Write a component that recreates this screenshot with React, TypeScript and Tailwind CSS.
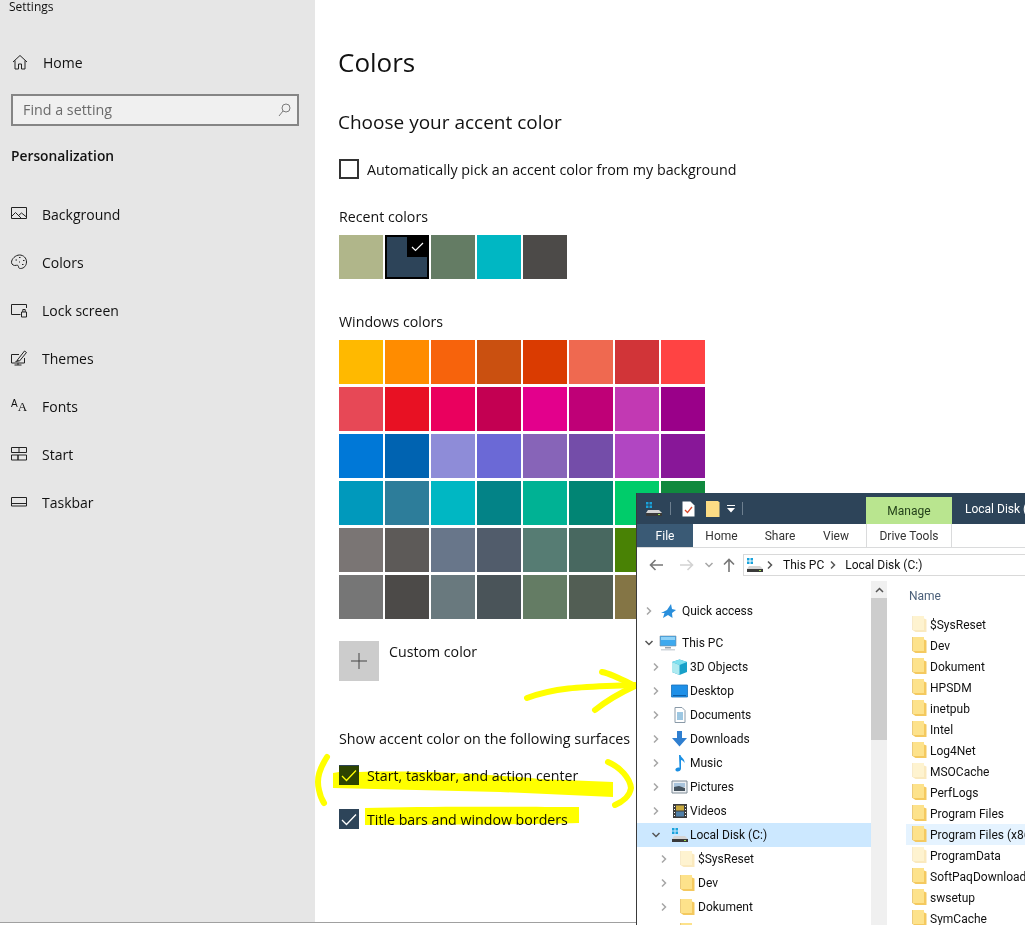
import React from "react";

const recentColors = ["#b0b68a", "#2d4459", "#647c64", "#00b7c3", "#4c4a48"];

const windowsColors = [
  ["#ffb900", "#ff8c00", "#f7630c", "#ca5010", "#da3b01", "#ef6950", "#d13438", "#ff4343"],
  ["#e74856", "#e81123", "#ea005e", "#c30052", "#e3008c", "#bf0077", "#c239b3", "#9a0089"],
  ["#0078d7", "#0063b1", "#8e8cd8", "#6b69d6", "#8764b8", "#744da9", "#b146c2", "#881798"],
  ["#0099bc", "#2d7d9a", "#00b7c3", "#038387", "#00b294", "#018574", "#00cc6a", "#10893e"],
  ["#7a7574", "#5d5a58", "#68768a", "#515c6b", "#567c73", "#486860", "#498205", "#107c10"],
  ["#767676", "#4c4a48", "#69797e", "#4a5459", "#647c64", "#525e54", "#847545", "#7e735f"],
];

const Line = ({ d }: { d: string }) => (
  <svg width="18" height="18" viewBox="0 0 18 18" fill="none" stroke="#222" strokeWidth="1" className="shrink-0">
    <path d={d} />
  </svg>
);

const navItems = [
  { label: "Background", d: "M1.500 2.500h15v11h-15zM1.500 11.500l4-4 6 6M8.500 10.500l3-2.500 5 4" },
  { label: "Colors", d: "M9.500 2c4 0 7 3 7 7 0 3.500-2.500 6.500-6 6.500-1.500 0-2-.8-2-1.800 0-1.200-1-1.700-2-1.400-2.500.7-5-.5-5-3C1.500 6 5.500 2 9.500 2zM5.500 7h1.500M9 4.500h1.500M13 7.500h1.500M12 11.500h1.500M9 9h1" },
  { label: "Lock screen", d: "M16.500 7V3.500h-15v10h9M11.500 11h5v5h-5zM12.800 11V8.500h2.400V11" },
  { label: "Themes", d: "M9 5.500H1.500v8.500h13V9M4.500 16h7M8 14v2M7 11.500L14.500 2l2 1.500-7 8.500zM5.500 12.500l3-.5" },
  { label: "Fonts", d: "" },
  { label: "Start", d: "M1.500 2.500h15v5h-15zM9 2.500v5M1.500 10h6.500v5h-6.500zM8 10h8.500v5H8z" },
  { label: "Taskbar", d: "M1.500 4.500h15v8.500h-15zM1.500 10.500h15" },
];

const Folder = ({ faded }: { faded?: boolean }) => (
  <svg width="15" height="17" viewBox="0 0 15 17" className={faded ? "opacity-40 shrink-0" : "shrink-0"}>
    <path d="M0.500 0h11.500v14H0.500z" fill="#fde28b" />
    <path d="M12 2.500l2.500 1v12.500H3.500L0.500 14H12z" fill="#f4c95f" />
    <path d="M0.500 0v14" stroke="#e6c26a" strokeWidth="0.800" />
  </svg>
);

const Chevron = ({ open, dark }: { open?: boolean; dark?: boolean }) => (
  <svg width="10" height="10" viewBox="0 0 10 10" fill="none" stroke={dark ? "#555" : "#a6a6a6"} strokeWidth="1.500" className="shrink-0">
    <path d={open ? "M1.500 3l3.500 3.500L8.500 3" : "M3 1.500L6.500 5 3 8.500"} />
  </svg>
);

const Drive = () => (
  <svg width="18" height="16" viewBox="0 0 18 16" className="shrink-0">
    <path d="M1 1h2.500v2.500H1zM4.500 1H7v2.500H4.500zM1 4.500h2.500V7H1zM4.500 4.500H7V7H4.500z" fill="#19a3dc" />
    <path d="M3 9h11l3 3H1z" fill="#d5d5d5" />
    <path d="M1 12h16v3H1z" fill="#3a3a3a" />
    <path d="M13 13h2v1h-2z" fill="#9ce04c" />
  </svg>
);

const treeIcons: Record<string, React.ReactNode> = {
  "This PC": (
    <svg width="18" height="16" viewBox="0 0 18 16" className="shrink-0">
      <path d="M1 1h16v10H1z" fill="#3ea9ee" stroke="#7c8ea0" strokeWidth="0.600" />
      <path d="M2 2h14v3H2z" fill="#8ed2f8" />
      <path d="M6 12h6v1.500H6z" fill="#9aa5ae" />
      <path d="M2 14h14v1.500H2z" fill="#cfd5da" />
    </svg>
  ),
  "3D Objects": (
    <svg width="17" height="16" viewBox="0 0 17 16" className="shrink-0">
      <path d="M8.500 0.500L16 3v10l-7.500 3L1 13V3z" fill="#18a0c9" />
      <path d="M1 3l7.500 3L16 3 8.500 0.500z" fill="#7ee0ee" />
      <path d="M1 3l7.500 3v10L1 13z" fill="#aeeaf0" />
    </svg>
  ),
  Desktop: (
    <svg width="17" height="16" viewBox="0 0 17 16" className="shrink-0">
      <path d="M0.500 2h16v12h-16z" fill="#1e90e8" stroke="#1670b8" strokeWidth="0.800" />
      <path d="M2 12h13v1H2z" fill="#0c5ea8" />
    </svg>
  ),
  Documents: (
    <svg width="16" height="16" viewBox="0 0 16 16" className="shrink-0">
      <path d="M3 0.500h7l3 3v12H3z" fill="#fff" stroke="#8a9aa8" />
      <path d="M5 6h6M5 8h6M5 10h6M5 12h6" stroke="#3b8ec4" />
    </svg>
  ),
  Downloads: (
    <svg width="17" height="16" viewBox="0 0 17 16" className="shrink-0">
      <path d="M6 0h5v7h5l-7.500 8.500L1 7h5z" fill="#2f7fd0" />
    </svg>
  ),
  Music: (
    <svg width="16" height="17" viewBox="0 0 16 17" className="shrink-0">
      <path d="M7 0h1.500c.5 3 4.500 3.500 4 8-.8-2-2.500-3-3.500-3v8.500c0 2-2 3.200-3.800 3-2-.3-2.400-2.200-1-3.300 1-.8 2.300-.9 3.300-.5z" fill="#1a8fe3" />
    </svg>
  ),
  Pictures: (
    <svg width="17" height="16" viewBox="0 0 17 16" className="shrink-0">
      <path d="M1 2h15v12H1z" fill="#eef1f4" stroke="#7e8b96" />
      <path d="M3 4h11v4H3z" fill="#a9c4dc" />
      <path d="M3 8l5-1 6 2v3H3z" fill="#45535e" />
    </svg>
  ),
  Videos: (
    <svg width="16" height="16" viewBox="0 0 16 16" className="shrink-0">
      <path d="M1 1h14v14H1z" fill="#3d3d3d" />
      <path d="M4 2.500h8v5H4z" fill="#c7a93e" />
      <path d="M4 8.500h8v5H4z" fill="#4f7fa8" />
      <path d="M2 3h1v1H2zM2 6h1v1H2zM2 9h1v1H2zM2 12h1v1H2zM13 3h1v1h-1zM13 6h1v1h-1zM13 9h1v1h-1zM13 12h1v1h-1z" fill="#fff" />
    </svg>
  ),
};

const pcItems = ["3D Objects", "Desktop", "Documents", "Downloads", "Music", "Pictures", "Videos"];

const files = [
  { name: "$SysReset", faded: true },
  { name: "Dev" },
  { name: "Dokument" },
  { name: "HPSDM" },
  { name: "inetpub" },
  { name: "Intel" },
  { name: "Log4Net" },
  { name: "MSOCache", faded: true },
  { name: "PerfLogs" },
  { name: "Program Files" },
  { name: "Program Files (x86)", selected: true },
  { name: "ProgramData", faded: true },
  { name: "SoftPaqDownloadDirectory" },
  { name: "swsetup" },
  { name: "SymCache" },
];

const Explorer = () => (
  <div className="absolute left-[636px] top-[493px] w-[389px] h-[432px] bg-white border-l border-[#3a3a3a] overflow-hidden flex flex-col text-[12px] leading-[16px] text-[#111] font-['Roboto',sans-serif]">
    <div className="h-[31px] bg-[#2d4459] flex items-end shrink-0 pl-2">
      <div className="h-[31px] flex items-center gap-[7px] w-[221px] shrink-0">
        <Drive />
        <span className="w-px h-[13px] bg-[#6d7f8f]" />
        <svg width="13" height="16" viewBox="0 0 13 16" className="ml-1">
          <path d="M0.500 0.500h8l4 4v11H0.500z" fill="#fff" />
          <path d="M3 9l2.500 2.500L10 6" stroke="#d9482b" strokeWidth="1.300" fill="none" />
        </svg>
        <svg width="14" height="16" viewBox="0 0 14 16" className="ml-1">
          <path d="M0 0h12l1.500 1.500V16H0z" fill="#fcdc85" />
        </svg>
        <svg width="8" height="8" viewBox="0 0 8 8">
          <path d="M0 0h8v1H0zM0 3h8L4 7.500z" fill="#fff" />
        </svg>
        <span className="w-px h-[13px] bg-[#6d7f8f]" />
      </div>
      <div className="w-[86px] h-[27px] shrink-0 bg-[#b9e58f] flex items-center justify-center text-[#24421a] pt-[1px]">Manage</div>
      <span className="ml-[13px] h-[31px] flex items-center text-white whitespace-nowrap">Local Disk (C:)</span>
    </div>
    <div className="h-[24px] flex border-b border-[#dadbdc] shrink-0">
      <div className="w-[56px] bg-[#3a5a75] text-white flex items-center justify-center">File</div>
      <div className="w-[57px] flex items-center justify-center text-[#333]">Home</div>
      <div className="w-[60px] flex items-center justify-center text-[#333]">Share</div>
      <div className="w-[52px] flex items-center justify-center text-[#333]">View</div>
      <div className="ml-[4px] w-[86px] flex items-center justify-center text-[#333] border-x border-[#dadbdc]">Drive Tools</div>
    </div>
    <div className="h-[33px] flex items-center shrink-0 pl-[12px]">
      <svg width="14" height="12" viewBox="0 0 14 12" fill="none" stroke="#777" strokeWidth="1.600">
        <path d="M14 6H1.500M6.500 1L1.500 6l5 5" />
      </svg>
      <svg width="14" height="12" viewBox="0 0 14 12" fill="none" stroke="#d2d2d2" strokeWidth="1.600" className="ml-[17px]">
        <path d="M0 6h12.500M7.500 1l5 5-5 5" />
      </svg>
      <span className="ml-[10px]"><Chevron open /></span>
      <svg width="12" height="14" viewBox="0 0 12 14" fill="none" stroke="#777" strokeWidth="1.600" className="ml-[9px]">
        <path d="M6 14V2M1 6.500l5-5 5 5" />
      </svg>
      <div className="ml-[8px] flex-1 h-[22px] border border-[#d9d9d9] border-r-0 flex items-center pl-[2px]">
        <Drive />
        <span className="ml-[1px]"><Chevron dark /></span>
        <span className="ml-[8px]">This PC</span>
        <span className="ml-[4px]"><Chevron dark /></span>
        <span className="ml-[7px] whitespace-nowrap">Local Disk (C:)</span>
      </div>
    </div>
    <div className="flex flex-1 min-h-0">
      <div className="w-[234px] shrink-0 pt-[18px]">
        <div className="h-[24px] flex items-center pl-[7px] gap-[2px]">
          <span className="mr-[3px] flex"><Chevron /></span>
          <svg width="17" height="16" viewBox="0 0 17 16" className="shrink-0 ml-[1px]">
            <path d="M11 1l1 5 4 1-4 3 .5 5-4.500-3-5 3 1.500-5H1l6-3z" fill="#2a8fdc" />
          </svg>
          <span className="ml-[3px]">Quick access</span>
        </div>
        <div className="h-[8px]" />
        <div className="h-[24px] flex items-center pl-[7px] gap-[2px]">
          <span className="mr-[3px] flex"><Chevron open dark /></span>
          {treeIcons["This PC"]}
          <span className="ml-[3px]">This PC</span>
        </div>
        {pcItems.map((item) => (
          <div key={item} className="h-[24px] flex items-center pl-[14px] gap-[2px]">
            <span className="mr-[8px] flex"><Chevron /></span>
            <span className="w-[17px] flex justify-center shrink-0">{treeIcons[item]}</span>
            <span>{item}</span>
          </div>
        ))}
        <div className="h-[24px] flex items-center pl-[14px] gap-[1px] bg-[#cce8ff]">
          <span className="mr-[9px] flex"><Chevron open dark /></span>
          <Drive />
          <span>Local Disk (C:)</span>
        </div>
        {["$SysReset", "Dev", "Dokument"].map((item, i) => (
          <div key={item} className="h-[24px] flex items-center pl-[22px] gap-[2px]">
            <span className="mr-[9px] flex"><Chevron /></span>
            <Folder faded={i === 0} />
            <span className="ml-[1px]">{item}</span>
          </div>
        ))}
        <div className="h-[24px] flex items-center pl-[43px]">
          <Folder />
        </div>
      </div>
      <div className="w-[16px] shrink-0 bg-[#f0f0f0] flex flex-col">
        <div className="h-[17px] flex items-center justify-center">
          <svg width="9" height="6" viewBox="0 0 9 6" fill="none" stroke="#555" strokeWidth="1.500">
            <path d="M1 5l3.500-3.500L8 5" />
          </svg>
        </div>
        <div className="h-[142px] bg-[#cdcdcd]" />
      </div>
      <div className="flex-1 min-w-0 pl-[19px]">
        <div className="h-[33px] pl-[3px] flex items-center text-[#4c607a] -mt-[2px]">Name</div>
        <div className="flex flex-col mt-[2px]">
          {files.map((file) => (
            <div key={file.name} className={`h-[21px] flex items-center whitespace-nowrap pl-[6px] ${file.selected ? "bg-[#e5f3ff]" : ""}`}>
              <Folder faded={file.faded} />
              <span className="ml-[3px]">{file.name}</span>
            </div>
          ))}
        </div>
      </div>
    </div>
  </div>
);

const Annotations = () => (
  <svg className="absolute left-0 top-0 mix-blend-multiply pointer-events-none" width="1025" height="925" viewBox="0 0 1025 925" fill="none" stroke="#ffff00" strokeLinecap="round" strokeLinejoin="round">
    <path d="M327 757C320 768 316 778 319 790C320 795 322 800 324 803" strokeWidth="6" />
    <path d="M608 762C620 767 630 778 631 788C630 796 622 802 615 805" strokeWidth="6" />
    <path d="M333 773L339 772V766H359V772C420 770 500 775 540 779L613 782V797L500 792L333 788Z" fill="#ffff00" stroke="none" />
    <path d="M365 808C430 806 520 807 579 807V823C500 825 430 824 365 825Z" fill="#ffff00" stroke="none" />
    <path d="M527 698C560 686 590 687 635 685" strokeWidth="6" />
    <path d="M602 672C612 674 625 681 635 686C622 692 605 702 595 710" strokeWidth="6" />
  </svg>
);

const Check = () => (
  <svg width="16" height="13" viewBox="0 0 16 13" fill="none" stroke="#fff" strokeWidth="1.300">
    <path d="M1 7l4.500 4.500L15 1.500" />
  </svg>
);

const App = () => {
  return (
    <div className="relative w-[1025px] h-[925px] overflow-hidden bg-white font-['Open_Sans',sans-serif] text-[#111]">
      <div className="flex h-[923px] border-b border-[#a0a0a0]">
        <aside className="w-[315px] shrink-0 bg-[#e6e6e6] flex flex-col">
          <div className="h-[14px] pl-[9px] text-[12px] leading-[14px]">Settings</div>
          <div className="mt-[32px] h-[32px] flex items-center pl-[12px] gap-[15px] text-[14px]">
            <svg width="16" height="16" viewBox="0 0 16 16" fill="none" stroke="#222" strokeWidth="1">
              <path d="M1 8l7-6.500L15 8M3 6.500V15h3.500v-5h3v5H13V6.500" />
            </svg>
            Home
          </div>
          <div className="mt-[16px] ml-[11px] w-[288px] h-[32px] border-2 border-[#858585] bg-[#f0f0f0] flex items-center justify-between pl-[10px] pr-[6px] text-[14.3px] text-[#6b6b6b] pb-[1px]">
            Find a setting
            <svg width="13" height="14" viewBox="0 0 13 14" fill="none" stroke="#7a7a7a" strokeWidth="1">
              <circle cx="8" cy="5" r="4" />
              <path d="M5 8l-4 5" />
            </svg>
          </div>
          <div className="mt-[19px] pl-[11px] h-[22px] flex items-center text-[13.8px] font-semibold">Personalization</div>
          <nav className="mt-[23px] flex flex-col">
            {navItems.map((item) => (
              <div key={item.label} className="h-[48px] flex items-center pl-[10px] gap-[14px] text-[14px]">
                {item.d ? (
                  <Line d={item.d} />
                ) : (
                  <span className="w-[18px] h-[18px] shrink-0 flex items-end justify-center text-[13px] leading-[17px] font-['Liberation_Sans',sans-serif]">
                    <span className="text-[10px] leading-[14px] self-start">A</span>
                    <span className="font-['Liberation_Serif',serif]">A</span>
                  </span>
                )}
                {item.label}
              </div>
            ))}
          </nav>
        </aside>
        <main className="flex-1 pl-[24px] flex flex-col text-[14.2px]">
          <h1 className="mt-[42px] -ml-[1px] h-[40px] flex items-center text-[26px] font-normal">Colors</h1>
          <h2 className="mt-[25px] -ml-[1px] h-[30px] flex items-center text-[19px]">Choose your accent color</h2>
          <div className="mt-[17px] h-[30px] flex items-center gap-[8px]">
            <span className="w-[20px] h-[20px] border-2 border-[#333]" />
            <span className="pt-[2px] text-[14.3px]">Automatically pick an accent color from my background</span>
          </div>
          <div className="mt-[22px] h-[20px] flex items-center pt-[2px]">Recent colors</div>
          <div className="mt-[9px] flex gap-[2px]">
            {recentColors.map((color, i) => (
              <div key={color} className={`relative w-[44px] h-[44px] ${i === 1 ? "border-2 border-black" : ""}`} style={{ backgroundColor: color }}>
                {i === 1 && (
                  <div className="absolute right-0 top-0 w-[20px] h-[20px] bg-black flex items-center justify-center">
                    <svg width="13" height="10" viewBox="0 0 13 10" fill="none" stroke="#fff" strokeWidth="1.200">
                      <path d="M1 5l3.500 3.500L12 1" />
                    </svg>
                  </div>
                )}
              </div>
            ))}
          </div>
          <div className="mt-[32px] h-[20px] flex items-center pt-[2px]">Windows colors</div>
          <div className="mt-[9px] flex flex-col gap-[3px]">
            {windowsColors.map((row) => (
              <div key={row[0]} className="flex gap-[2px]">
                {row.map((color) => (
                  <div key={color} className="w-[44px] h-[44px]" style={{ backgroundColor: color }} />
                ))}
              </div>
            ))}
          </div>
          <div className="mt-[22px] flex gap-[10px]">
            <div className="w-[40px] h-[40px] bg-[#cccccc] flex items-center justify-center">
              <svg width="16" height="16" viewBox="0 0 16 16" stroke="#444" strokeWidth="1">
                <path d="M8 0v16M0 8h16" />
              </svg>
            </div>
            <span className="leading-[22px]">Custom color</span>
          </div>
          <div className="mt-[47px] h-[20px] flex items-center whitespace-nowrap pt-[2px] text-[14.3px]">Show accent color on the following surfaces</div>
          <div className="mt-[17px] flex items-center gap-[8px] h-[20px]">
            <span className="w-[20px] h-[20px] bg-[#2d4459] flex items-center justify-center"><Check /></span>
            <span className="pt-[2px]">Start, taskbar, and action center</span>
          </div>
          <div className="mt-[24px] flex items-center gap-[8px] h-[20px]">
            <span className="w-[20px] h-[20px] bg-[#2d4459] flex items-center justify-center"><Check /></span>
            <span className="pt-[2px]">Title bars and window borders</span>
          </div>
        </main>
      </div>
      <Annotations />
      <Explorer />
    </div>
  );
};

export default App;
